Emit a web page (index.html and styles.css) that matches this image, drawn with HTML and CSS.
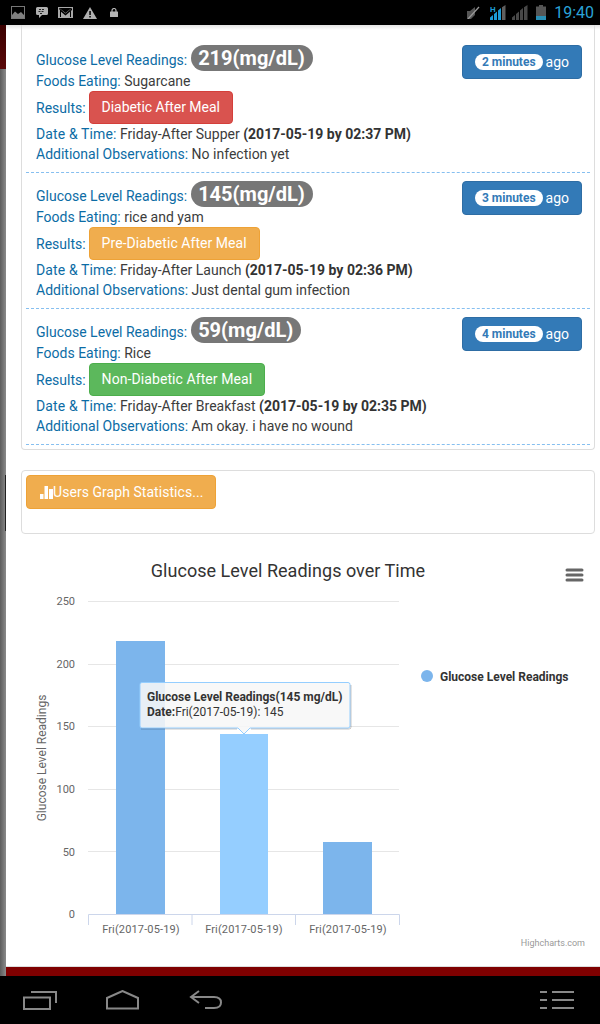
FILE: index.html
```html
<!DOCTYPE html>
<html lang="en">
<head>
<meta charset="utf-8">
<title>Glucose Level Readings</title>
<link rel="stylesheet" href="styles.css">
</head>
<body>
<div class="phone">
  <header class="status">
    <div class="status-left">
      <svg width="14" height="13" viewBox="0 0 14 13"><rect x="0.500" y="0.500" width="13" height="12" fill="none" stroke="#777"/><path d="M1 12 V9 L4 5.500 L7 8 L10 6 L13 9 V12 Z" fill="#808080"/></svg>
      <svg width="12" height="11" viewBox="0 0 12 11"><path d="M1.500 0 H10.500 Q12 0 12 1.500 V6.500 Q12 8 10.500 8 H6 L3 11 V8 H1.500 Q0 8 0 6.500 V1.500 Q0 0 1.500 0Z" fill="#b0b0b0"/><path d="M3 2.500h2M6 2.500h2M2.500 4.500h2M5.500 4.500h2M4 6.500h2" stroke="#222" stroke-width="1"/></svg>
      <svg width="15" height="11" viewBox="0 0 15 11"><rect width="15" height="11" fill="#a8a8a8"/><path d="M1 1 L7.500 6.500 L14 1 V3 L7.500 8.500 L3 4.800 V10 H2 V3 L1 2 Z M12 4.800 V10 H13 V3.500Z" fill="#000"/><path d="M1.200 1 H13.800 L7.500 6Z" fill="#000"/></svg>
      <svg width="14" height="12" viewBox="0 0 14 12"><path d="M7 0 L14 12 H0 Z" fill="#b0b0b0"/><rect x="6.300" y="4" width="1.500" height="4" fill="#000"/><rect x="6.300" y="9" width="1.500" height="1.500" fill="#000"/></svg>
      <svg class="ico-lock" width="8" height="9" viewBox="0 0 8 9"><rect y="3.500" width="8" height="5.500" rx="0.500" fill="#b5b5b5"/><path d="M2 4 V2.500 A2 2 0 0 1 6 2.500 V4" fill="none" stroke="#b5b5b5" stroke-width="1.200"/></svg>
    </div>
    <div class="status-right">
      <svg class="st-mute" width="13" height="13" viewBox="0 0 13 13"><path d="M0 5 H3 L8 1 V9 L4 13 H0 Z" fill="#555"/><path d="M1 13 L12 1" stroke="#999" stroke-width="1.300"/></svg>
      <svg class="st-sig1" width="17" height="15" viewBox="0 0 17 15"><path d="M0 15 V12.500 L3 10 V15Z M4 15 V9 L7 6.500 V15Z M8 15 V5.500 L11 3 V15Z" fill="#1c9bd6"/><path d="M12 15 V2.200 L15.500 0 V15Z" fill="#5f5f5f"/><text x="0" y="7" class="h-mark">H</text></svg>
      <svg class="st-sig2" width="16" height="15" viewBox="0 0 16 15"><path d="M0 15 V12.500 L3 10 V15Z M4 15 V9 L7 6.500 V15Z M8 15 V5.500 L11 3 V15Z M12 15 V2.200 L15.500 0 V15Z" fill="#484848"/></svg>
      <svg class="st-bat" width="10" height="15" viewBox="0 0 10 15"><rect x="3" width="4" height="2" fill="#555"/><rect y="1.500" width="10" height="9.500" fill="#555"/><rect y="11" width="10" height="4" fill="#2a8fb5"/></svg>
      <span class="clock">19:40</span>
    </div>
  </header>

  <div class="viewport">
    <div class="edge"></div>
    <div class="column">
      <main class="page">
        <section class="panel list-panel">
          <article class="row">
            <a class="when"><span class="pill">2 minutes</span> ago</a>
            <div class="line line-first"><span class="lbl">Glucose Level Readings:</span><span class="reading">219(mg/dL)</span></div>
            <div class="line"><span class="lbl">Foods Eating:</span> Sugarcane</div>
            <div class="line line-result"><span class="lbl">Results:</span> <span class="btn danger">Diabetic After Meal</span></div>
            <div class="line"><span class="lbl lbl-date">Date &amp; Time:</span> Friday-After Supper <b>(2017-05-19 by 02:37 PM)</b></div>
            <div class="line"><span class="lbl">Additional Observations:</span> No infection yet</div>
          </article>
          <article class="row">
            <a class="when"><span class="pill">3 minutes</span> ago</a>
            <div class="line line-first"><span class="lbl">Glucose Level Readings:</span><span class="reading">145(mg/dL)</span></div>
            <div class="line"><span class="lbl">Foods Eating:</span> rice and yam</div>
            <div class="line line-result"><span class="lbl">Results:</span> <span class="btn warning">Pre-Diabetic After Meal</span></div>
            <div class="line"><span class="lbl lbl-date">Date &amp; Time:</span> Friday-After Launch <b>(2017-05-19 by 02:36 PM)</b></div>
            <div class="line"><span class="lbl">Additional Observations:</span> Just dental gum infection</div>
          </article>
          <article class="row">
            <a class="when"><span class="pill">4 minutes</span> ago</a>
            <div class="line line-first"><span class="lbl">Glucose Level Readings:</span><span class="reading">59(mg/dL)</span></div>
            <div class="line"><span class="lbl">Foods Eating:</span> Rice</div>
            <div class="line line-result"><span class="lbl">Results:</span> <span class="btn success">Non-Diabetic After Meal</span></div>
            <div class="line"><span class="lbl lbl-date">Date &amp; Time:</span> Friday-After Breakfast <b>(2017-05-19 by 02:35 PM)</b></div>
            <div class="line"><span class="lbl">Additional Observations:</span> Am okay. i have no wound</div>
          </article>
        </section>

        <section class="panel graph-panel">
          <span class="btn warning graph-btn">
            <svg width="13" height="13" viewBox="0 0 13 13"><path d="M0 13 V8 H3.500 V13 Z M4.500 13 V0 H8 V13 Z M9 13 V3 H13 V13Z" fill="#fff"/></svg>Users Graph Statistics...
          </span>
        </section>

        <svg class="chart" width="594" height="420" viewBox="6 546 594 420">
          <text class="c-title" x="288" y="577" text-anchor="middle">Glucose Level Readings over Time</text>
          <path d="M567 570 H582 M567 575 H582 M567 580 H582" stroke="#666" stroke-width="3" stroke-linecap="round"/>
          <path d="M88 601.500 H399 M88 664.500 H399 M88 726.500 H399 M88 789.500 H399 M88 851.500 H399" stroke="#e6e6e6"/>
          <g class="c-axis" text-anchor="end">
            <text x="75" y="605">250</text>
            <text x="75" y="668">200</text>
            <text x="75" y="730">150</text>
            <text x="75" y="793">100</text>
            <text x="75" y="856">50</text>
            <text x="75" y="918">0</text>
          </g>
          <text class="c-ylabel" transform="translate(46 758) rotate(-90)" text-anchor="middle">Glucose Level Readings</text>
          <rect x="116" y="641" width="49" height="273" fill="#7cb5ec"/>
          <rect x="220" y="734" width="48" height="180" fill="#95ceff"/>
          <rect x="323" y="842" width="49" height="72" fill="#7cb5ec"/>
          <path d="M88.500 925 V914.500 H399.500 V925 M192 914.500 V925 M295.500 914.500 V925" fill="none" stroke="#ccd6eb"/>
          <g class="c-axis c-xaxis" text-anchor="middle">
            <text x="141" y="933">Fri(2017-05-19)</text>
            <text x="244" y="933">Fri(2017-05-19)</text>
            <text x="348" y="933">Fri(2017-05-19)</text>
          </g>
          <circle cx="427" cy="676" r="6" fill="#7cb5ec"/>
          <text class="c-legend" x="440" y="681">Glucose Level Readings</text>
          <path class="c-tip" d="M142 682.500 H348 Q350 682.500 350 684.500 V726 Q350 728 348 728 H250 L244 734 L238 728 H142 Q140 728 140 726 V684.500 Q140 682.500 142 682.500Z"/>
          <path class="c-tip-shadow" d="M351 685 V727 Q351 729 349 729 H251 M141 729 H237"/>
          <text class="c-tip-text" x="147" y="701"><tspan class="c-b">Glucose Level Readings(145 mg/dL)</tspan></text>
          <text class="c-tip-text" x="147" y="716"><tspan class="c-b">Date:</tspan>Fri(2017-05-19): 145</text>
          <text class="c-credit" x="585" y="946" text-anchor="end">Highcharts.com</text>
        </svg>
      </main>
      <div class="redbar"></div>
    </div>
  </div>

  <nav class="navbar">
    <svg width="34" height="20" viewBox="0 0 34 20"><path d="M1 7.500 H27 V19 H1 Z M8 2 H33 V13" fill="none" stroke="#888" stroke-width="2"/></svg>
    <svg class="nav-home" width="33" height="20" viewBox="0 0 33 20"><path d="M1 8 L16.500 1 L32 8 V18.500 H1 Z" fill="none" stroke="#888" stroke-width="2"/></svg>
    <svg class="nav-back" width="34" height="20" viewBox="0 0 34 20"><path d="M10 1 L2 7 L10 13 M2 7 H25 Q32 7 32 12.500 Q32 18 25 18 H16" fill="none" stroke="#888" stroke-width="2"/></svg>
    <svg class="nav-menu" width="34" height="20" viewBox="0 0 34 20"><path d="M0 2 H7 M12 2 H34 M0 10 H7 M12 10 H34 M0 18 H7 M12 18 H34" stroke="#888" stroke-width="2"/></svg>
  </nav>
</div>
</body>
</html>
```

FILE: styles.css
```css
* { box-sizing: border-box; }
html, body { margin: 0; padding: 0; }
body { font-family: Roboto, "Liberation Sans", sans-serif; font-size: 14px; color: #3c3c3c; background: #000; }

.phone { width: 600px; height: 1024px; display: flex; flex-direction: column; overflow: hidden; background: #000; }

.status { height: 25px; flex: none; display: flex; justify-content: space-between; align-items: center; background: #000; padding: 0 6px 0 11px; }
.status-left { display: flex; align-items: center; gap: 10px; }
.status-left svg:first-child { margin-right: 1px; }
.ico-lock { margin-left: 3px; }
.status-right { display: flex; align-items: center; }
.st-sig1 { margin-left: 10px; }
.st-sig2 { margin-left: 5px; }
.st-bat { margin-left: 8px; }
.clock { font-size: 16px; color: #2aa3d8; margin-left: 8px; }
.h-mark { font: bold 8px Roboto, sans-serif; fill: #1c9bd6; }

.viewport { flex: 1; display: flex; min-height: 0; }
.edge {
  width: 6px;
  flex: none;
  background:
    linear-gradient(#222, #222) no-repeat 5px 450px / 1px 56px,
    linear-gradient(#3a0000, #5a0808) no-repeat 0 0 / 6px 44px,
    linear-gradient(to right, #5c5c5c, #8a8a8a);
}
.column { flex: 1; min-width: 0; display: flex; flex-direction: column; }
.page { flex: 1; min-height: 0; background: linear-gradient(#e4e4e4, #fff 5px); display: flex; flex-direction: column; align-items: stretch; }

.panel { border: 1px solid #ddd; border-radius: 4px; margin: 0 5px 0 15px; }
.list-panel { border-top: 0; border-radius: 0 0 4px 4px; padding: 12px 4px 0; height: 425px; }
.row { position: relative; height: 136px; padding: 8px 0 0 10px; border-bottom: 1px dashed #86bff0; }
.line { line-height: 20px; white-space: nowrap; }
.line-first { height: 26px; display: flex; align-items: flex-start; gap: 4px; }
.line-first .lbl { padding-top: 5px; }
.line-result { height: 33px; display: flex; align-items: center; gap: 3px; }
.lbl { color: #0c6ca5; }
.lbl-date { letter-spacing: .12px; }
.line b { color: #333; }
.reading { background: #777; color: #fff; font-weight: 700; font-size: 20px; line-height: 26px; height: 26px; padding: 0 8px 0 7px; border-radius: 13px; }
.btn { display: inline-block; color: #fff; height: 33px; line-height: 31px; padding: 0 12px; border-radius: 4px; border: 1px solid transparent; white-space: nowrap; }
.danger { background: #d9534f; border-color: #d43f3a; letter-spacing: -.05px; }
.warning { background: #f0ad4e; border-color: #eea236; letter-spacing: .05px; }
.success { background: #5cb85c; border-color: #4cae4c; letter-spacing: .08px; }
.when { position: absolute; top: 8px; right: 8px; height: 34px; width: 120px; background: #337ab7; border: 1px solid #2e6da4; border-radius: 4px; color: #fff; display: flex; align-items: center; justify-content: center; gap: 3px; }
.pill { background: #fff; color: #337ab7; font-size: 12px; font-weight: 700; line-height: 16px; height: 16px; padding: 0 7px; border-radius: 8px; }

.graph-panel { margin-top: 20px; height: 64px; padding: 4px; flex: none; }
.graph-btn { display: inline-flex; align-items: center; height: 34px; line-height: 1; padding: 0 12px 0 13px; }

.chart { display: block; margin-top: 12px; flex: none; }
.chart text { font-family: Roboto, "Liberation Sans", sans-serif; }
.c-title { font-size: 18px; fill: #333; letter-spacing: .03px; }
.c-axis text { font-size: 11px; fill: #666; }
.c-xaxis text { letter-spacing: .15px; }
.c-ylabel { font-size: 12px; fill: #666; }
.c-legend { font-size: 12px; font-weight: 700; fill: #333; }
.c-tip { fill: rgba(247,247,247,.88); stroke: #95ceff; stroke-width: 1; }
.c-tip-shadow { fill: none; stroke: rgba(0,0,0,.22); stroke-width: 1; }
.c-tip-text { font-size: 12px; fill: #333; }
.c-b { font-weight: 700; }
.c-credit { font-size: 9px; fill: #999; }

.redbar { height: 10px; flex: none; background: #7f0000; border-top: 1px solid #ddd; }

.navbar { height: 48px; flex: none; background: #000; display: flex; align-items: center; padding: 0 26px 0 23px; }
.nav-home { margin-left: 49px; }
.nav-back { margin-left: 50px; }
.nav-menu { margin-left: auto; }
```
